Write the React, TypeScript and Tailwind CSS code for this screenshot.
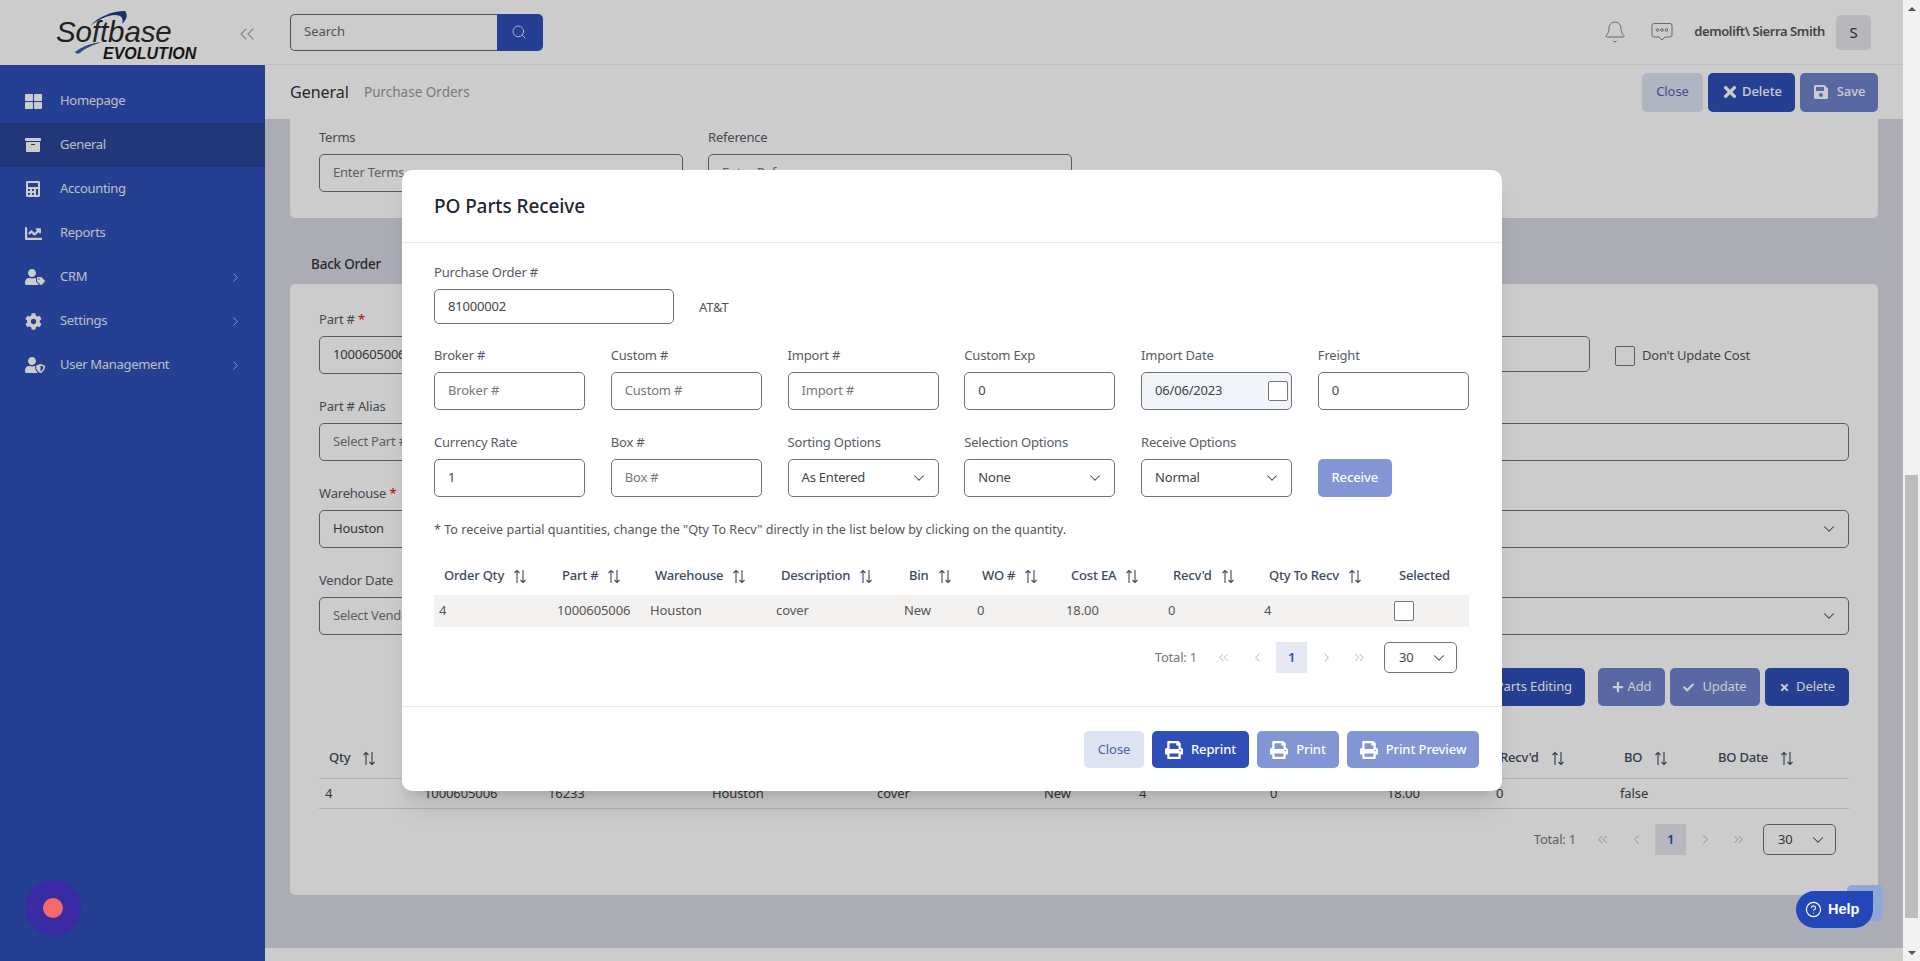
import type { ReactNode } from 'react'
import { Bell, ChevronDown, ChevronLeft, ChevronRight, ChevronsLeft, ChevronsRight, CircleHelp, Search } from 'lucide-react'
import {
    FaArchive, FaCalculator, FaChartLine, FaCheck, FaCog, FaPlus, FaPrint, FaSave, FaThLarge, FaTimes, FaUserShield, FaUserTag,
} from 'react-icons/fa'

const navItems = [
    { label: 'Homepage', icon: <FaThLarge size={17} /> },
    { label: 'General', icon: <FaArchive size={16} />, active: true },
    { label: 'Accounting', icon: <FaCalculator size={16} /> },
    { label: 'Reports', icon: <FaChartLine size={17} /> },
    { label: 'CRM', icon: <FaUserTag size={20} />, arrow: true },
    { label: 'Settings', icon: <FaCog size={17} />, arrow: true },
    { label: 'User Management', icon: <FaUserShield size={20} />, arrow: true },
]

const modalCols = 'grid grid-cols-[118px_93px_126px_128px_73px_89px_102px_96px_130px_79px]'
const modalHead = ['Order Qty', 'Part #', 'Warehouse', 'Description', 'Bin', 'WO #', 'Cost EA', "Recv'd", 'Qty To Recv']
const modalRow = ['4', '1000605006', 'Houston', 'cover', 'New', '0', '18.00', '0', '4']

const backCols = 'grid grid-cols-[99px_124px_164px_165px_167px_95px_131px_117px_109px_124px_94px_141px]'
const backHead = ['Qty', '', '', '', '', '', '', '', '', "Recv'd", 'BO', 'BO Date']
const backRow = ['4', '1000605006', '16233', 'Houston', 'cover', 'New', '4', '0', '18.00', '0', 'false', '']

function SortIcon() {
    return (
        <svg width="14" height="15" viewBox="0 0 14 15" fill="none" stroke="currentColor" strokeWidth="1.1" className="shrink-0">
            <path d="M4 14V1.5M1.5 4 4 1.5 6.5 4" />
            <path d="M10 1v12.5M7.5 11l2.5 2.5 2.5-2.5" />
        </svg>
    )
}

function Logo() {
    return (
        <svg width="265" height="65" viewBox="0 0 265 65">
            <path d="M90 26C98 17 112 11 125 11 128 15 127 19 122 24 124 18 121 15 115 15 107 15 98 20 90 26Z" fill="#1f3f7d" />
            <path d="M75 52C81 47 91 43 102 42 92 45 84 49 80 53 78 54 76 54 75 52Z" fill="#3b5fa8" />
            <text x="56" y="42" fontFamily="Liberation Sans, sans-serif" fontStyle="italic" fontSize="29.5" letterSpacing="-0.1" fill="#2a2a2a">Softbase</text>
            <text x="103" y="59" fontFamily="Liberation Sans, sans-serif" fontStyle="italic" fontWeight="700" fontSize="16" fill="#1c1c1c">EVOLUTION</text>
        </svg>
    )
}

function Field({ label, required, children }: { label: string; required?: boolean; children: ReactNode }) {
    return (
        <div className="min-w-0">
            <div className="h-5 mb-[7px] text-[13px] tracking-[-0.2px] leading-5 text-[#555b66] whitespace-nowrap">
                {label}
                {required && <span className="text-red-600"> *</span>}
            </div>
            {children}
        </div>
    )
}

function Box({ value, placeholder, select, h = 'h-[38px]' }: { value?: string; placeholder?: string; select?: boolean; h?: string }) {
    return (
        <div className={`flex items-center justify-between pl-[13px] pr-[10px] ${h} border border-[#6f7276] rounded-[5px] text-[13px] tracking-[-0.2px] whitespace-nowrap overflow-hidden`}>
            <span className={value ? 'text-[#444]' : 'text-[#777]'}>{value || placeholder}</span>
            {select && <ChevronDown size={18} strokeWidth={1.4} className="text-[#444] shrink-0" />}
        </div>
    )
}

function Btn({ children, className }: { children: ReactNode; className: string }) {
    return (
        <div className={`flex items-center justify-center gap-2 rounded-[5px] text-[13px] tracking-[-0.1px] font-medium whitespace-nowrap ${className}`}>
            {children}
        </div>
    )
}

function Pager({ active }: { active: string }) {
    return (
        <div className="flex items-center justify-end text-[13px] tracking-[-0.2px] text-[#777]">
            <span className="mr-[9px]">Total: 1</span>
            <span className="w-[34px] flex justify-center text-[#999]"><ChevronsLeft size={15} strokeWidth={1.2} /></span>
            <span className="w-[34px] flex justify-center text-[#999]"><ChevronLeft size={15} strokeWidth={1.2} /></span>
            <span className={`ml-[2px] w-[31px] h-[31px] flex items-center justify-center font-semibold text-[#2f4fb7] ${active}`}>1</span>
            <span className="w-[38px] flex justify-center text-[#999]"><ChevronRight size={15} strokeWidth={1.2} /></span>
            <span className="w-[28px] flex justify-center text-[#999]"><ChevronsRight size={15} strokeWidth={1.2} /></span>
            <div className="ml-[11px] w-[73px] h-[31px] flex items-center justify-between pl-[14px] pr-[8px] border border-[#6f7276] rounded-[5px] text-[#444]">
                <span>30</span>
                <ChevronDown size={18} strokeWidth={1.4} />
            </div>
        </div>
    )
}

export default function App() {
    return (
        <div className="flex h-screen w-full overflow-hidden font-['Noto_Sans',sans-serif] bg-white">
            <div className="relative flex flex-1 min-w-0">
                {/* Sidebar */}
                <aside className="flex flex-col w-[265px] shrink-0">
                    <div className="relative h-[65px] bg-white">
                        <Logo />
                        <ChevronsLeft size={24} strokeWidth={1.1} className="absolute left-[235px] top-[22px] text-[#aaa]" />
                    </div>
                    <nav className="flex-1 bg-[#2f4fb7] pt-[14px]">
                        {navItems.map(item => (
                            <div key={item.label} className={`flex items-center h-[44px] pl-[25px] pr-[22px] text-white text-[13px] tracking-[-0.3px] ${item.active ? 'bg-[#2a4599]' : ''}`}>
                                <span className="w-[35px]">{item.icon}</span>
                                <span className="flex-1 opacity-90">{item.label}</span>
                                {item.arrow && <ChevronRight size={15} strokeWidth={1.4} className="opacity-70" />}
                            </div>
                        ))}
                    </nav>
                </aside>

                <div className="flex flex-col flex-1 min-w-0">
                    {/* Top bar */}
                    <header className="flex items-center h-[65px] shrink-0 bg-white border-b border-[#eee] pl-[25px] pr-[32px]">
                        <div className="flex w-[253px] h-[37px]">
                            <div className="flex-1 flex items-center pl-[13px] border border-[#666] border-r-0 rounded-l-[5px] text-[13px] text-[#666]">Search</div>
                            <div className="w-[46px] flex items-center justify-center pr-[3px] bg-[#2f4fb7] rounded-r-[5px] text-white">
                                <Search size={16} strokeWidth={1.2} />
                            </div>
                        </div>
                        <div className="flex-1" />
                        <Bell size={24} strokeWidth={0.9} className="text-[#777]" />
                        <svg width="22" height="20" viewBox="0 0 22 20" fill="none" stroke="#777" strokeWidth="0.9" className="ml-[24px]">
                            <path d="M3 1.5h16a2 2 0 0 1 2 2V13a2 2 0 0 1-2 2h-5l-3 3-3-3H3a2 2 0 0 1-2-2V3.5a2 2 0 0 1 2-2Z" />
                            <circle cx="6.5" cy="8" r="1.3" />
                            <circle cx="11" cy="8" r="1.3" />
                            <circle cx="15.5" cy="8" r="1.3" />
                        </svg>
                        <span className="ml-[21px] text-[13px] font-semibold tracking-[-0.4px] text-[#555]">demolift\ Sierra Smith</span>
                        <div className="ml-[11px] w-[35px] h-[35px] flex items-center justify-center rounded-[5px] bg-[#e6e6ec] text-[15px] text-[#333]">S</div>
                    </header>

                    {/* Sub header */}
                    <div className="flex items-center h-[54px] shrink-0 bg-white pl-[25px] pr-[25px]">
                        <span className="text-[16px] text-[#333]">General</span>
                        <span className="ml-[15px] text-[13.5px] text-[#999]">Purchase Orders</span>
                        <div className="flex-1" />
                        <div className="flex gap-[5px]">
                            <Btn className="w-[61px] h-[39px] bg-[#dde3f3] text-[#4f62a8] font-normal">Close</Btn>
                            <Btn className="w-[87px] h-[39px] bg-[#2f4fb7] text-white gap-[3px]"><FaTimes size={18} />Delete</Btn>
                            <Btn className="w-[78px] h-[39px] bg-[#2f4fb7]/70 text-white"><FaSave size={16} />Save</Btn>
                        </div>
                    </div>

                    {/* Page body */}
                    <main className="flex-1 min-h-0 overflow-hidden bg-[#d8d8e2] px-[25px]">
                        <div className="h-[99px] bg-white rounded-b-[5px] px-[29px] pt-[8px]">
                            <div className="grid grid-cols-[364px_364px] gap-x-[25px]">
                                <Field label="Terms"><Box placeholder="Enter Terms" /></Field>
                                <Field label="Reference"><Box placeholder="Enter Reference" /></Field>
                            </div>
                        </div>

                        <div className="h-[66px] flex items-end pl-[21px] pb-[10px]">
                            <span className="text-[13.5px] font-medium tracking-[-0.2px] text-[#333]">Back Order</span>
                        </div>

                        <div className="h-[611px] bg-white rounded-[5px] pt-[25px] px-[29px]">
                            <div className="h-[87px] flex gap-[25px]">
                                <div className="w-[400px]"><Field label="Part #" required><Box value="1000605006" /></Field></div>
                                <div className="flex-1 pt-[27px] flex items-start gap-[25px]">
                                    <div className="flex-1"><Box h="h-[36px]" /></div>
                                    <div className="flex items-center gap-[7px] h-[40px] mr-[99px] text-[13px] tracking-[-0.2px] text-[#555] whitespace-nowrap">
                                        <span className="w-5 h-5 border border-[#777] rounded-[2px]" />
                                        Don't Update Cost
                                    </div>
                                </div>
                            </div>
                            <div className="h-[87px] grid grid-cols-2 gap-[25px]">
                                <Field label="Part # Alias"><Box placeholder="Select Part #" /></Field>
                                <div className="pt-[27px]"><Box /></div>
                            </div>
                            <div className="h-[87px] grid grid-cols-2 gap-[25px]">
                                <Field label="Warehouse" required><Box value="Houston" select /></Field>
                                <div className="pt-[27px]"><Box select /></div>
                            </div>
                            <div className="h-[87px] grid grid-cols-2 gap-[25px]">
                                <Field label="Vendor Date"><Box placeholder="Select Vendor Date" select /></Field>
                                <div className="pt-[27px]"><Box select /></div>
                            </div>

                            <div className="mt-[11px] flex justify-end">
                                <Btn className="w-[130px] h-[38px] bg-[#2f4fb7] text-white font-normal mr-[13px] !justify-end pr-[13px]">Parts Editing</Btn>
                                <Btn className="w-[67px] h-[38px] bg-[#2f4fb7]/70 text-white font-normal mr-[5px] gap-[4px]"><FaPlus size={12} />Add</Btn>
                                <Btn className="w-[90px] h-[38px] bg-[#2f4fb7]/70 text-white font-normal mr-[5px]"><FaCheck size={11} />Update</Btn>
                                <Btn className="w-[84px] h-[38px] bg-[#2f4fb7] text-white font-normal gap-[6px]"><FaTimes size={11} />Delete</Btn>
                            </div>

                            <div className={`${backCols} mt-[32px] h-[41px] items-center border-b border-[#ddd] text-[13px] font-medium tracking-[-0.2px] text-[#3c4a5e]`}>
                                {backHead.map((h, i) => (
                                    <div key={i} className="flex items-center gap-[12px] pl-[10px]">
                                        {h}
                                        {h && <SortIcon />}
                                    </div>
                                ))}
                            </div>
                            <div className={`${backCols} h-[30px] items-center border-b border-[#ddd] text-[13px] tracking-[-0.1px] text-[#444]`}>
                                {backRow.map((c, i) => <div key={i} className="pl-[6px]">{c}</div>)}
                            </div>
                            <div className="mt-[15px] pr-[13px]">
                                <Pager active="bg-[#e6e6ef]" />
                            </div>
                        </div>

                        <div className="h-[53px]" />
                    </main>
                    <footer className="h-[13px] shrink-0 bg-white" />
                </div>

                {/* Modal backdrop */}
                <div className="absolute inset-0 bg-black/20" />

                {/* PO Parts Receive modal */}
                <div className="absolute left-[402px] top-[170px] w-[1100px] h-[621px] bg-white rounded-[10px] shadow-xl">
                    <div className="flex items-center h-[73px] pl-[32px] pt-[1px] border-b border-[#e8e8e8]">
                        <h2 className="text-[19px] font-medium tracking-[-0.1px] text-[#1f2733]">PO Parts Receive</h2>
                    </div>

                    <div className="h-[464px] pt-[19px] pl-[32px] pr-[33px] border-b border-[#e8e8e8]">
                        <div className="flex items-end">
                            <div className="w-[240px]">
                                <div className="h-5 mb-[7px] text-[13px] tracking-[-0.2px] leading-5 text-[#555b66]">Purchase Order #</div>
                                <Box value="81000002" h="h-[35px]" />
                            </div>
                            <span className="ml-[25px] mb-[7px] text-[13px] tracking-[-0.2px] text-[#555]">AT&amp;T</span>
                        </div>

                        <div className="grid grid-cols-6 gap-x-[25.6px] gap-y-[22px] mt-[21px]">
                            <Field label="Broker #"><Box placeholder="Broker #" /></Field>
                            <Field label="Custom #"><Box placeholder="Custom #" /></Field>
                            <Field label="Import #"><Box placeholder="Import #" /></Field>
                            <Field label="Custom Exp"><Box value="0" /></Field>
                            <Field label="Import Date">
                                <div className="flex items-center justify-between pl-[13px] pr-[2px] h-[38px] bg-[#f1f4f9] border border-[#6f7276] rounded-[5px] text-[13px] tracking-[-0.2px] text-[#444]">
                                    06/06/2023
                                    <span className="w-5 h-5 bg-white border border-[#777] rounded-[2px] mr-[1px]" />
                                </div>
                            </Field>
                            <Field label="Freight"><Box value="0" /></Field>
                            <Field label="Currency Rate"><Box value="1" /></Field>
                            <Field label="Box #"><Box placeholder="Box #" /></Field>
                            <Field label="Sorting Options"><Box value="As Entered" select /></Field>
                            <Field label="Selection Options"><Box value="None" select /></Field>
                            <Field label="Receive Options"><Box value="Normal" select /></Field>
                            <div className="pt-[27px]">
                                <Btn className="w-[74px] h-[38px] bg-[#2f4fb7]/60 text-white">Receive</Btn>
                            </div>
                        </div>

                        <div className="mt-[23px] h-5 text-[12.6px] leading-5 text-[#555]">
                            * To receive partial quantities, change the "Qty To Recv" directly in the list below by clicking on the quantity.
                        </div>

                        <div className={`${modalCols} mt-[17px] h-[38px] items-center text-[13px] font-medium tracking-[-0.2px] text-[#3c4a5e]`}>
                            {modalHead.map(h => (
                                <div key={h} className="flex items-center gap-[9px] pl-[10px] whitespace-nowrap">
                                    {h}
                                    <SortIcon />
                                </div>
                            ))}
                            <div className="pl-[10px]">Selected</div>
                        </div>
                        <div className={`${modalCols} h-[32px] items-center bg-[#f3f2f1] text-[13px] tracking-[-0.1px] text-[#555]`}>
                            {modalRow.map((c, i) => <div key={i} className="pl-[5px]">{c}</div>)}
                            <div className="pl-[5px]"><div className="w-5 h-5 bg-white border border-[#777] rounded-[2px]" /></div>
                        </div>
                        <div className="mt-[15px] pr-[12px]">
                            <Pager active="bg-[#e6e8f4]" />
                        </div>
                    </div>

                    <div className="flex justify-end gap-[8px] pt-[24px] pr-[23px]">
                        <Btn className="w-[60px] h-[37px] bg-[#dde3f3] text-[#4f62a8] font-normal">Close</Btn>
                        <Btn className="w-[97px] h-[37px] bg-[#2f4fb7] text-white"><FaPrint size={18} />Reprint</Btn>
                        <Btn className="w-[82px] h-[37px] bg-[#2f4fb7]/60 text-white"><FaPrint size={18} />Print</Btn>
                        <Btn className="w-[132px] h-[37px] bg-[#2f4fb7]/60 text-white"><FaPrint size={18} />Print Preview</Btn>
                    </div>
                </div>

                {/* Recorder dot */}
                <div className="absolute left-[25px] top-[880px] w-[56px] h-[56px] rounded-full bg-[#3a2aa3] flex items-center justify-center">
                    <div className="w-5 h-5 rounded-full bg-[#f56b6b]" />
                </div>

                {/* Help widget */}
                <div className="absolute left-[1847px] top-[885px] w-[36px] h-[36px] rounded-[5px] bg-[#8fa7d4]" />
                <div className="absolute left-[1796px] top-[891px] w-[77px] h-[37px] flex items-center pl-[9px] gap-[6px] bg-[#2347b8] rounded-l-full rounded-br-full rounded-tr-[6px] text-white text-[14.5px] font-bold font-['Liberation_Sans',sans-serif]">
                    <CircleHelp size={17} strokeWidth={1.6} />
                    Help
                </div>
            </div>

            {/* Page scrollbar */}
            <div className="flex flex-col items-center w-[17px] shrink-0 bg-[#f1f1f1]">
                <div className="h-[17px] flex items-center justify-center">
                    <span className="w-0 h-0 border-x-[4px] border-x-transparent border-b-[4px] border-b-[#505050]" />
                </div>
                <div className="h-[458px]" />
                <div className="w-[13px] h-[443px] bg-[#bdbdbd]" />
                <div className="flex-1" />
                <div className="h-[17px] flex items-center justify-center">
                    <span className="w-0 h-0 border-x-[4px] border-x-transparent border-t-[4px] border-t-[#505050]" />
                </div>
            </div>
        </div>
    )
}
